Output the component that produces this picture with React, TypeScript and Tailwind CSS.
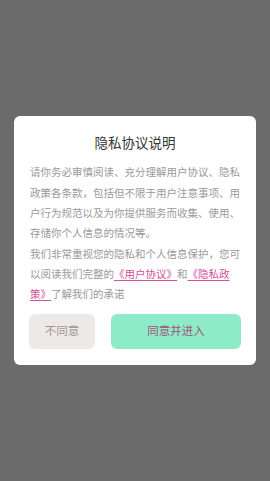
const App = () => {
  return (
    <div
      className="w-[270px] h-[481px] bg-[#6b6b6b] flex items-center justify-center"
      style={{ fontFamily: '"Noto Sans CJK SC", "Noto Sans", sans-serif' }}
    >
      <div className="w-[242px] bg-white rounded-[6px] px-[15px] pt-[16px] pb-[16px]">
        <h1 className="text-center text-[13.5px] leading-[20px] text-[#333333] mb-[10px]">隐私协议说明</h1>
        <div className="px-px text-[10.5px] leading-[20.3px] text-[#9a9a9a]">
          <p>请你务必审慎阅读、充分理解用户协议、隐私政策各条款，包括但不限于用户注意事项、用户行为规范以及为你提供服务而收集、使用、存储你个人信息的情况等。</p>
          <p>
            我们非常重视您的隐私和个人信息保护，您可以阅读我们完整的
            <span className="text-[#d0509a] underline underline-offset-2">《用户协议》</span>
            和
            <span className="text-[#d0509a] underline underline-offset-2">《隐私政策》</span>
            了解我们的承诺
          </p>
        </div>
        <div className="flex gap-[16px] mt-[9px]">
          <button className="w-[66px] h-[35px] rounded-[6px] bg-[#ede9e7] text-[#9c9696] text-[11.5px]">不同意</button>
          <button className="flex-1 h-[35px] rounded-[6px] bg-[#8eebc8] text-[#a0527c] text-[11.5px]">同意并进入</button>
        </div>
      </div>
    </div>
  );
};

export default App;
